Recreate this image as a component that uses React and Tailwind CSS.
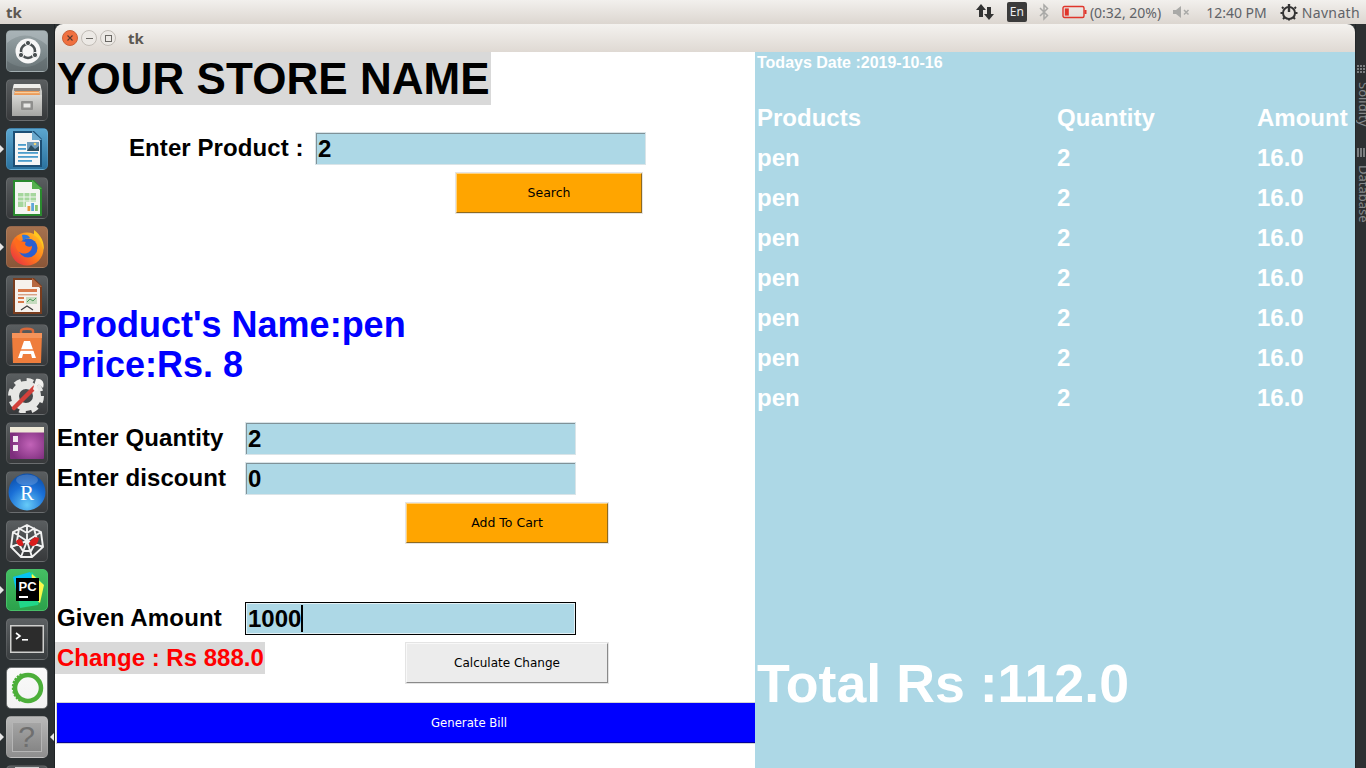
import React from "react";

const sans = "font-['Liberation_Sans',Arial,sans-serif]";
const ubuntu = "font-['Noto_Sans','Open_Sans',sans-serif]";
const deja = "font-['DejaVu_Sans',sans-serif]";

function Tile({ from, to, children, arrowL, arrowR, border = "border-white/10" }) {
  return (
    <div className="relative h-[42px] w-[42px] shrink-0">
      <div className={`h-full w-full overflow-hidden rounded-[5px] border ${border} bg-gradient-to-b ${from} ${to} flex items-center justify-center`}>
        {children}
      </div>
      {arrowL && (
        <svg className="absolute left-[-6px] top-[17px]" width="4" height="8" viewBox="0 0 4 8"><path d="M0 0L4 4L0 8Z" fill="#e6e6e6" /></svg>
      )}
      {arrowR && (
        <svg className="absolute right-[-6px] top-[17px]" width="4" height="8" viewBox="0 0 4 8"><path d="M4 0L0 4L4 8Z" fill="#e6e6e6" /></svg>
      )}
    </div>
  );
}

const dark = { from: "from-[#5a5e60]", to: "to-[#37393b]" };

function Dock() {
  return (
    <div className="flex w-[55px] shrink-0 flex-col items-center gap-[7px] overflow-hidden border-r border-[#1f2325] bg-[#2c3133] pr-[1px] pt-[6px]">
      <Tile from="from-[#99a5a8]" to="to-[#6a7578]">
        <svg width="40" height="40" viewBox="0 0 40 40">
          <path d="M0 12Q18 -4 40 14V0H0Z" fill="#bcc6c9" opacity=".45" />
          <path d="M0 30Q20 44 40 26V40H0Z" fill="#4f585b" opacity=".35" />
          <circle cx="21" cy="20" r="12.5" fill="#f7f7f7" />
          <circle cx="21" cy="20" r="7" fill="none" stroke="#4a5052" strokeWidth="2.6" />
          <circle cx="21" cy="12" r="2.6" fill="#4a5052" stroke="#f7f7f7" />
          <circle cx="14" cy="24" r="2.6" fill="#4a5052" stroke="#f7f7f7" />
          <circle cx="28" cy="24" r="2.6" fill="#4a5052" stroke="#f7f7f7" />
        </svg>
      </Tile>
      <Tile {...dark}>
        <svg width="36" height="36" viewBox="0 0 36 36">
          <defs>
            <linearGradient id="cab" x1="0" y1="0" x2="0" y2="1">
              <stop offset="0" stopColor="#d8d8d5" />
              <stop offset="1" stopColor="#a5a5a2" />
            </linearGradient>
          </defs>
          <path d="M5 2H31L33 9V34H3V9Z" fill="#c9c9c6" />
          <path d="M5 2H31L32 6H4Z" fill="#eeeeeb" />
          <rect x="5" y="6" width="26" height="3" fill="#8a8580" />
          <path d="M6 9H30L31 13H5Z" fill="#eb9a58" />
          <rect x="6" y="10" width="24" height="1.2" fill="#f6cf9f" />
          <rect x="3" y="13" width="30" height="21" fill="url(#cab)" />
          <rect x="12" y="19" width="12" height="9" rx="1" fill="#8f8f8d" />
          <rect x="14.5" y="21.5" width="7" height="4" fill="#e8e8e6" />
        </svg>
      </Tile>
      <Tile from="from-[#5ba6cf]" to="to-[#2a729f]" arrowL>
        <svg width="34" height="38" viewBox="0 0 34 38">
          <path d="M3 1H24L32 9V37H3Z" fill="#1c4f75" />
          <path d="M5 3H22L30 11V35H5Z" fill="#f5f6f6" />
          <path d="M22 1V10H32Z" fill="#6aa9cd" />
          <rect x="17" y="12" width="12" height="9" fill="#6f9cba" />
          <path d="M17 21L21 15L25 19L29 16V21Z" fill="#2d4f5f" />
          <circle cx="25" cy="14" r="1.3" fill="#f0d878" />
          <rect x="8" y="14" width="8" height="1.8" fill="#4a9ccb" />
          <rect x="8" y="18" width="8" height="1.8" fill="#4a9ccb" />
          <rect x="8" y="22" width="20" height="1.8" fill="#4a9ccb" />
          <rect x="8" y="26" width="20" height="1.8" fill="#4a9ccb" />
          <rect x="8" y="30" width="14" height="1.8" fill="#4a9ccb" />
        </svg>
      </Tile>
      <Tile {...dark}>
        <svg width="34" height="38" viewBox="0 0 34 38">
          <path d="M3 1H24L32 9V37H3Z" fill="#2a8a2f" />
          <path d="M5 3H22L30 11V35H5Z" fill="#f4f6f2" />
          <path d="M22 1V10H32Z" fill="#55b04f" />
          <rect x="8" y="14" width="18" height="14" fill="#a5d79d" />
          <path d="M8 18H26M8 22H26M14 14V28M20 14V28" stroke="#f4f6f2" strokeWidth="1" />
          <rect x="16" y="23" width="13" height="10" fill="#f4f6f2" />
          <rect x="17.5" y="27" width="2.8" height="5" fill="#e8983c" />
          <rect x="21.2" y="24" width="2.8" height="8" fill="#5fa6d8" />
          <rect x="25" y="26" width="2.8" height="6" fill="#8cc56d" />
        </svg>
      </Tile>
      <Tile from="from-[#a5714e]" to="to-[#8a5638]" arrowL>
        <svg width="38" height="38" viewBox="0 0 38 38">
          <defs>
            <linearGradient id="ff" x1="1" y1="0" x2="0" y2="1">
              <stop offset="0" stopColor="#ffd02a" />
              <stop offset=".5" stopColor="#ff7a1a" />
              <stop offset="1" stopColor="#e3224a" />
            </linearGradient>
          </defs>
          <circle cx="19" cy="21" r="16.5" fill="url(#ff)" />
          <path d="M26 2C33 7 37 15 35.5 22C34 14 31 10 26 7Z" fill="#ffc71f" />
          <circle cx="20" cy="20" r="9.5" fill="#2a5fd0" />
          <path d="M8 9C10 14 14 13 18 14C15 17 20 20 24 18C24 24 18 27 13 25C8 23 6 16 8 9Z" fill="#ff6b1d" />
          <path d="M14 7C17 6 21 7 22 10C19 10 16 11 15 13Z" fill="#2f7ae0" />
        </svg>
      </Tile>
      <Tile {...dark}>
        <svg width="34" height="38" viewBox="0 0 34 38">
          <path d="M3 1H24L32 9V37H3Z" fill="#7a3d1e" />
          <path d="M5 3H22L30 11V35H5Z" fill="#f6f1ec" />
          <path d="M22 1V10H32Z" fill="#b7683f" />
          <rect x="8" y="12" width="19" height="3" fill="#d8794a" />
          <rect x="8" y="17" width="19" height="1.4" fill="#d8a285" />
          <rect x="8" y="20" width="6" height="2" fill="#d8794a" />
          <rect x="8" y="24" width="6" height="2" fill="#d8794a" />
          <rect x="16" y="20" width="11" height="7" fill="#c7dcc0" />
          <path d="M17 25L20 22L23 24L26 21" stroke="#4f9a58" fill="none" />
          <path d="M11 33L17 29L23 33" stroke="#3d3d3d" strokeWidth="1.3" fill="none" />
        </svg>
      </Tile>
      <Tile {...dark}>
        <svg width="36" height="38" viewBox="0 0 36 38">
          <path d="M12 8V5C12 2 24 2 24 5V8" fill="none" stroke="#d9683a" strokeWidth="2.5" />
          <path d="M3 7H33L32 37H4Z" fill="#ef7d3c" />
          <path d="M3 7H33V12H3Z" fill="#f5935a" />
          <path d="M15 15H21L27 32H23L22 28H14L13 32H9Z" fill="#fff" />
          <path d="M8 24H28" stroke="#ef7d3c" strokeWidth="1.5" />
        </svg>
      </Tile>
      <Tile {...dark}>
        <svg width="38" height="38" viewBox="0 0 38 38">
          <circle cx="18" cy="21" r="11" fill="none" stroke="#e7e7e5" strokeWidth="8" />
          <circle cx="18" cy="21" r="15.5" fill="none" stroke="#e7e7e5" strokeWidth="5" strokeDasharray="6.5 5.7" />
          <path d="M6 33L26 13" stroke="#d2403a" strokeWidth="4.5" strokeLinecap="round" />
          <path d="M25 14L28 4C34 3 37 8 35 13L31 9.5L28.5 11.5L30.5 15C28 17 26 16 25 14Z" fill="#f2f1ef" />
        </svg>
      </Tile>
      <Tile {...dark}>
        <svg width="38" height="34" viewBox="0 0 38 34">
          <defs>
            <radialGradient id="pur" cx=".6" cy=".55" r=".6">
              <stop offset="0" stopColor="#c263b8" />
              <stop offset="1" stopColor="#7d2e7d" />
            </radialGradient>
          </defs>
          <rect x="2" y="1" width="34" height="32" rx="1" fill="url(#pur)" />
          <rect x="2" y="1" width="34" height="5.5" fill="#efead8" />
          <rect x="5" y="10" width="5" height="6" fill="#f2e9f1" />
          <rect x="5" y="19" width="5" height="6" fill="#f2e9f1" />
        </svg>
      </Tile>
      <Tile {...dark}>
        <svg width="40" height="40" viewBox="0 0 40 40">
          <defs>
            <radialGradient id="rb" cx=".5" cy=".85" r=".85">
              <stop offset="0" stopColor="#66cbf8" />
              <stop offset=".6" stopColor="#1a6fd6" />
              <stop offset="1" stopColor="#0d4ea8" />
            </radialGradient>
          </defs>
          <circle cx="20" cy="20" r="18.5" fill="url(#rb)" />
          <ellipse cx="20" cy="8" rx="11" ry="5.5" fill="#fff" opacity=".18" />
          <text x="20" y="28" textAnchor="middle" fontSize="21" fontFamily="Liberation Serif" fill="#fff">R</text>
        </svg>
      </Tile>
      <Tile {...dark}>
        <svg width="38" height="38" viewBox="0 0 38 38">
          <path d="M19 3L33 10L35 25L24 35H13L3 25L5 10Z M19 3V19 M33 10L19 19 M35 25L19 19 M24 35L19 19 M13 35L19 19 M3 25L19 19 M5 10L19 19 M11 6.5L9 19L15 29H23L29 18L26 6.5L19 11Z" fill="none" stroke="#f1f1f1" strokeWidth="1.9" />
          <path d="M8 19Q13 14 15 21Q17 24 12 24Q9 23 8 19ZM21 21Q26 13 31 16Q30 23 25 24Q22 24 21 21Z" fill="#d91c1c" />
        </svg>
      </Tile>
      <Tile from="from-[#45bf63]" to="to-[#2ba24b]" arrowL border="border-[#48c068]">
        <svg width="38" height="38" viewBox="0 0 38 38">
          <path d="M6 8L24 1L36 14L30 34L12 37Z" fill="#21d789" />
          <path d="M24 3L36 14L32 32L20 22Z" fill="#fcf84a" />
          <path d="M5 6L22 1L28 20L10 28Z" fill="#07c3f2" />
          <rect x="8" y="7" width="23" height="23" fill="#000" />
          <rect x="11" y="25" width="9" height="2" fill="#fff" />
          <text x="10.5" y="20" fontSize="13" fontWeight="700" fontFamily="Liberation Sans" fill="#fff">PC</text>
        </svg>
      </Tile>
      <Tile from="from-[#5c6062]" to="to-[#3a3e40]">
        <svg width="36" height="30" viewBox="0 0 36 30">
          <rect x="1" y="1" width="34" height="28" fill="#cfcfcd" />
          <rect x="2.5" y="2.5" width="31" height="25" fill="#2c2c2c" />
          <path d="M7 9L11 12L7 15" stroke="#fff" strokeWidth="1.6" fill="none" />
          <rect x="13" y="15" width="6" height="1.6" fill="#fff" />
        </svg>
      </Tile>
      <Tile from="from-[#fafafa]" to="to-[#f2f2f2]" border="border-[#6b6f70]">
        <svg width="38" height="38" viewBox="0 0 38 38">
          <circle cx="20" cy="19" r="13" fill="none" stroke="#4caf3a" strokeWidth="4.5" />
          <path d="M14 6C8 9 5 14 6 21C7 26 9 29 13 31" fill="none" stroke="#4caf3a" strokeWidth="4" strokeDasharray="2 1.2" />
        </svg>
      </Tile>
      <Tile from="from-[#b9b9b9]" to="to-[#8e8e8e]" arrowL arrowR>
        <div className={`flex h-[30px] w-[30px] items-center justify-center border border-[#b5b5b5] bg-gradient-to-b from-[#a5a5a5] to-[#868686] text-[30px] leading-none text-[#6f6f6f] ${sans}`}>?</div>
      </Tile>
      <Tile {...dark}>
        <div className="mb-auto mt-[1px] h-[3px] w-[24px] bg-[#cfcfcf]" />
      </Tile>
    </div>
  );
}

function Field({ value, focused, w = "w-[331px]" }) {
  return (
    <div
      className={`flex h-[33px] ${w} shrink-0 items-center border bg-[#add8e6] pl-[2px] text-[24px] font-bold leading-none text-black ${
        focused
          ? "border-black shadow-[inset_0_0_0_1px_#e4f1f5]"
          : "border-[#d9e4e8] shadow-[inset_1px_1px_0_#7f9298]"
      }`}
    >
      <span>{value}</span>
      {focused && <span className="h-[27px] w-[2px] bg-black" />}
    </div>
  );
}

function Btn({ label, className, text = "text-[12.5px]", bg = "bg-[#ffa500]", edge = "border-t-[#ffd27f] border-l-[#ffd27f] border-b-[#8f6a1f] border-r-[#8f6a1f]" }) {
  return (
    <div className={`shrink-0 border border-[#e4e4e4] ${className}`}>
      <div className={`flex h-full w-full items-center justify-center border ${edge} ${bg} ${deja} ${text} leading-none`}>
        {label}
      </div>
    </div>
  );
}

function LeftPanel() {
  return (
    <div className={`flex w-[700px] shrink-0 flex-col bg-white text-black ${sans}`}>
      <div className="h-[53px] w-[436px] whitespace-nowrap bg-[#d9d9d9] pl-[2px] text-[44px] font-bold leading-[53px] tracking-[0.05px]">YOUR STORE NAME</div>
      <div className="mt-[27px] flex h-[33px] items-center">
        <div className="ml-[74px] w-[186px] whitespace-nowrap pb-[2px] text-[24px] font-bold leading-[31px] tracking-[0.08px]">Enter Product :</div>
        <Field value="2" />
      </div>
      <div className="mt-[7px] flex">
        <Btn label="Search" className="ml-[400px] h-[42px] w-[188px]" />
      </div>
      <div className="mt-[91px] pl-[2px] text-[36px] font-bold leading-[40px] text-[#0000ff]">
        <div>Product's Name:pen</div>
        <div>Price:Rs. 8</div>
      </div>
      <div className="mt-[37px] flex h-[33px] items-center">
        <div className="w-[190px] pb-[2px] pl-[2px] text-[24px] font-bold leading-[31px] tracking-[0.08px]">Enter Quantity</div>
        <Field value="2" />
      </div>
      <div className="mt-[7px] flex h-[33px] items-center">
        <div className="w-[190px] pb-[2px] pl-[2px] text-[24px] font-bold leading-[31px] tracking-[0.08px]">Enter discount</div>
        <Field value="0" />
      </div>
      <div className="mt-[7px] flex">
        <Btn label="Add To Cart" className="ml-[350px] h-[42px] w-[204px]" />
      </div>
      <div className="mt-[58px] flex h-[33px] items-center">
        <div className="w-[190px] pb-[2px] pl-[2px] text-[24px] font-bold leading-[31px] tracking-[0.15px]">Given Amount</div>
        <Field value="1000" focused />
      </div>
      <div className="mt-[7px] flex items-start">
        <div className="h-[32px] w-[210px] shrink-0 whitespace-nowrap bg-[#d9d9d9] pl-[2px] text-[24px] font-bold leading-[32px] text-[#ff0000]">Change : Rs 888.0</div>
        <Btn
          label="Calculate Change"
          text="text-[12px]"
          className="ml-[140px] h-[42px] w-[204px]"
          bg="bg-[#ececec]"
          edge="border-t-[#f8f8f8] border-l-[#f8f8f8] border-b-[#8a8a8a] border-r-[#8a8a8a]"
        />
      </div>
      <div className="ml-[1px] mt-[18px] h-[42px] border border-r-0 border-[#d4d4d4]">
        <div className="flex h-full items-center border-b border-b-[#00009c] bg-[#0000ff] pl-[374px] pt-[2px] text-white">
          <span className={`${deja} text-[11.7px] leading-none`}>Generate Bill</span>
        </div>
      </div>
    </div>
  );
}

const rows = Array.from({ length: 7 });

function RightPanel() {
  return (
    <div className={`flex w-[600px] shrink-0 flex-col bg-[#add8e6] pl-[2px] font-bold text-white ${sans}`}>
      <div className="h-[21px] text-[16px] leading-[21px]">Todays Date :2019-10-16</div>
      <div className="mt-[25px] grid grid-cols-[300px_200px_98px] text-[24px] leading-[40px]">
        <div>Products</div>
        <div className="tracking-[0.08px]">Quantity</div>
        <div>Amount</div>
        {rows.map((_, i) => (
          <React.Fragment key={i}>
            <div>pen</div>
            <div>2</div>
            <div>16.0</div>
          </React.Fragment>
        ))}
      </div>
      <div className="mt-[235px] whitespace-nowrap text-[53.7px] leading-[60px]">Total Rs :112.0</div>
    </div>
  );
}

function TopBar() {
  return (
    <div className={`flex h-[24px] shrink-0 items-center justify-between bg-gradient-to-b from-[#f2f0ed] to-[#dcd6d0] text-[#5c5c5c] ${ubuntu}`}>
      <span className="pl-[6px] text-[15px] font-bold text-[#5c5852]">tk</span>
      <div className="flex items-center text-[14px] text-[#5f6368]">
        <svg className="mr-[13px]" width="18" height="18" viewBox="0 0 18 18">
          <path d="M5 1L10 7H7V14H3V7H0Z M13 17L8 11H11V4H15V11H18Z" fill="#333" />
        </svg>
        <span className="mr-[12px] flex h-[20px] w-[20px] items-center justify-center rounded-[2px] bg-[#3b3b3b] text-[12px] text-[#eee]">En</span>
        <svg className="mr-[13px]" width="10" height="18" viewBox="0 0 10 18">
          <path d="M1 5L8.5 12.5L5 16V2L8.5 5.5L1 13" fill="none" stroke="#a9a9a7" strokeWidth="1.5" />
        </svg>
        <svg className="mr-[2px]" width="25" height="14" viewBox="0 0 25 14">
          <rect x="1" y="1.5" width="21" height="11" rx="1.5" fill="none" stroke="#e0352b" strokeWidth="1.4" />
          <rect x="2.8" y="3.4" width="4" height="7.2" fill="#e0352b" />
          <rect x="22.5" y="5" width="2" height="4" fill="#e0352b" />
        </svg>
        <span className="mr-[12px] ml-[1px] text-[14px]">(0:32, 20%)</span>
        <svg className="mr-[15px]" width="18" height="12" viewBox="0 0 18 12">
          <path d="M0 4H3L8 0V12L3 8H0Z" fill="#a9a9a7" />
          <path d="M11 4L15.5 8.5M15.5 4L11 8.5" stroke="#a9a9a7" strokeWidth="1.5" />
        </svg>
        <span className="mr-[13px]">12:40 PM</span>
        <svg className="mr-[4px]" width="18" height="18" viewBox="0 0 18 18">
          <circle cx="9" cy="10" r="6" fill="none" stroke="#333" strokeWidth="2" />
          <path d="M9 1V9" stroke="#333" strokeWidth="2.4" />
          <path d="M2 4L3.5 5.5M16 4L14.5 5.5M0.5 10H3M15 10H17.5M3 16L4.5 14.5M15 16L13.5 14.5M9 15V17.5" stroke="#333" strokeWidth="2" />
        </svg>
        <span className="pr-[6px] tracking-[0.35px]">Navnath</span>
      </div>
    </div>
  );
}

function TitleBar() {
  return (
    <div className={`flex h-[28px] shrink-0 items-center rounded-t-[8px] bg-gradient-to-b from-[#f4f2ef] to-[#dfd9d3] pl-[7px] ${ubuntu}`}>
      <div className="flex h-[16px] w-[16px] items-center justify-center rounded-full border border-[#c9623a] bg-[#f0703f]">
        <svg width="8" height="8" viewBox="0 0 8 8"><path d="M1.5 1.5L6.5 6.5M6.5 1.5L1.5 6.5" stroke="#5a3a30" strokeWidth="1.1" /></svg>
      </div>
      <div className="ml-[3px] flex h-[16px] w-[16px] items-center justify-center rounded-full border border-[#c2bdb7] bg-[#ece9e5]">
        <div className="h-[1px] w-[7px] bg-[#6a6864]" />
      </div>
      <div className="ml-[3px] flex h-[16px] w-[16px] items-center justify-center rounded-full border border-[#c2bdb7] bg-[#ece9e5]">
        <div className="h-[7px] w-[7px] border border-[#6a6864]" />
      </div>
      <span className="ml-[12px] text-[15px] font-bold text-[#5c5852]">tk</span>
    </div>
  );
}

function SideStrip() {
  return (
    <div className="flex w-[11px] shrink-0 flex-col items-start overflow-hidden border-l border-[#232628] bg-[#2d3032] pt-[41px] text-[#85888a]">
      <svg className="ml-[1px]" width="8" height="9" viewBox="0 0 8 9">
        <path d="M0 0h2v2H0zM3 0h2v2H3zM6 0h2v2H6zM0 3h2v2H0zM3 3h2v2H3zM6 3h2v2H6zM0 6h2v2H0zM3 6h2v2H3zM6 6h2v2H6z" fill="#7a7d7f" />
      </svg>
      <div className={`ml-[1px] mt-[8px] h-[50px] text-[13px] leading-[14px] ${ubuntu} [writing-mode:vertical-rl]`}>Solidity</div>
      <svg className="ml-[1px] mt-[16px]" width="8" height="9" viewBox="0 0 8 9">
        <path d="M0 0h2v9H0zM3 0h2v9H3zM6 0h2v9H6z" fill="#7a7d7f" />
      </svg>
      <div className={`ml-[1px] mt-[8px] text-[13px] leading-[14px] ${ubuntu} [writing-mode:vertical-rl]`}>Database</div>
    </div>
  );
}

export default function App() {
  return (
    <div className="flex h-[768px] w-[1366px] flex-col overflow-hidden bg-[#2c3133]">
      <TopBar />
      <div className="flex min-h-0 flex-1">
        <Dock />
        <div className="flex w-[1300px] shrink-0 flex-col overflow-hidden">
          <TitleBar />
          <div className="flex min-h-0 flex-1">
            <LeftPanel />
            <RightPanel />
          </div>
        </div>
        <SideStrip />
      </div>
    </div>
  );
}
